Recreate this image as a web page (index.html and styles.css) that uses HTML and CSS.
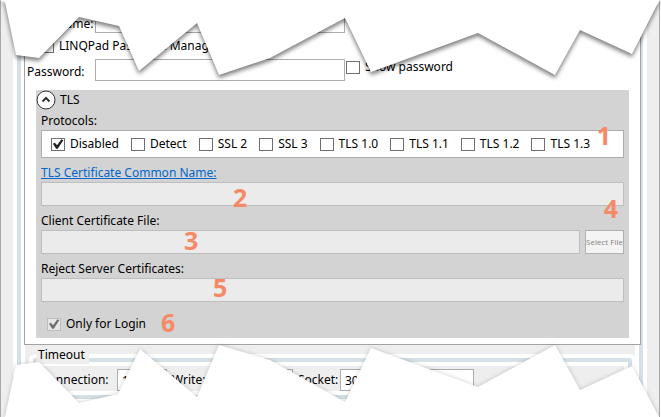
FILE: index.html
```html
<!DOCTYPE html>
<html lang="en">
<head>
<meta charset="utf-8">
<title>Connection settings</title>
<link rel="stylesheet" href="styles.css">
</head>
<body>
<main class="window">
  <div class="group"><div class="group-line"><div class="group-body">
    <section class="panel">
      <div class="credentials">
        <label for="user">User Name:</label>
        <input class="field" id="user" type="text">
        <label class="check manager"><input type="checkbox">LINQPad Password Manager</label>
        <label for="password">Password:</label>
        <input class="field" id="password" type="password">
        <label class="check show"><input type="checkbox">Show password</label>
      </div>
      <section class="tls">
        <header class="tls-head">
          <button class="toggle" type="button" aria-label="Collapse TLS">
            <svg viewBox="0 0 20 20" width="20" height="20"><circle cx="10" cy="10" r="9" fill="#fff" stroke="#333"/><path d="M6.500 11.500 10 8l3.500 3.500" fill="none" stroke="#333" stroke-width="2"/></svg>
          </button>
          <span>TLS</span>
        </header>
        <div class="caption">Protocols:</div>
        <div class="protocols">
          <label class="check"><input type="checkbox" checked>Disabled</label>
          <label class="check"><input type="checkbox">Detect</label>
          <label class="check"><input type="checkbox">SSL 2</label>
          <label class="check"><input type="checkbox">SSL 3</label>
          <label class="check"><input type="checkbox">TLS 1.0</label>
          <label class="check"><input type="checkbox">TLS 1.1</label>
          <label class="check"><input type="checkbox">TLS 1.2</label>
          <label class="check"><input type="checkbox">TLS 1.3</label>
          <span class="mark mark-1">1</span>
        </div>
        <div class="entry">
          <label for="common"><a href="#common">TLS Certificate Common Name:</a></label>
          <div class="line"><input class="field" id="common" type="text" disabled></div>
          <span class="mark mark-2">2</span>
        </div>
        <div class="entry">
          <label for="file">Client Certificate File:</label>
          <div class="line"><input class="field" id="file" type="text" disabled><button class="select" type="button" disabled>Select File</button></div>
          <span class="mark mark-3">3</span>
          <span class="mark mark-4">4</span>
        </div>
        <div class="entry">
          <label for="reject">Reject Server Certificates:</label>
          <div class="line"><input class="field" id="reject" type="text" disabled></div>
          <span class="mark mark-5">5</span>
        </div>
        <div class="login">
          <label class="check"><input type="checkbox" checked disabled>Only for Login</label>
          <span class="mark mark-6">6</span>
        </div>
      </section>
    </section>
    <section class="timeout">
      <h2>Timeout</h2>
      <div class="timeout-line"><div class="timeout-body">
        <label for="connection">Connection:</label><input class="field" id="connection" type="text" value="15">
        <label class="next" for="write">Write:</label><input class="field" id="write" type="text">
        <label class="next" for="socket">Socket:</label><input class="field" id="socket" type="text" value="300">
      </div></div>
    </section>
  </div></div></div>
</main>
<svg class="tear tear-top" viewBox="0 0 661 90" preserveAspectRatio="none" aria-hidden="true"><path fill="#fff" d="M0 0 5 2 16 55 39 58 79 17 119 26 139 71 197 23 219 75 270 58 345 18 371 72 478 33 555 75 580 30 632 54 659 1 661 0Z"/></svg>
<svg class="tear tear-bottom" viewBox="0 0 661 90" preserveAspectRatio="none" aria-hidden="true"><path fill="#fff" d="M5 90 16 38 39 35 79 76 118 67 140 22 197 70 219 18 270 33 345 75 371 21 478 60 555 18 580 63 632 39 659 90Z"/></svg>
</body>
</html>
```
FILE: styles.css
```css
* { box-sizing: border-box; }
body {
  position: relative;
  margin: 0;
  min-height: 100vh;
  overflow: hidden;
  background: #fff;
  color: #000;
  font: 12px/20px "Noto Sans", "Open Sans", sans-serif;
}
input, button { font: inherit; margin: 0; }

.window {
  min-height: 100vh;
  margin-right: 1px;
  padding: 0 12px;
  border: solid #a8a8a8;
  border-width: 0 1px;
  background: #eee;
}
.group, .group-body { border: solid #fff; border-width: 0 4px; }
.group-line { border: solid #d6e0e7; border-width: 0 4px; }
.group-body { background: #eee; min-height: 100vh; }

.panel {
  margin: 0 -6px 0 -1px;
  padding: 11px 11px 6px;
  border: 1px solid #a3a3a3;
  border-top: 0;
  background: #fff;
}
.credentials {
  display: grid;
  grid-template-columns: 68px 250px 1fr;
  grid-template-rows: 22px 26px 22px;
  align-items: center;
  margin: 0 0 9px -9px;
}
.credentials .manager { grid-column: 1 / -1; margin-left: 13px; }
.credentials .show { align-self: start; margin-left: 1px; line-height: 16px; }
.credentials label { white-space: nowrap; }
.credentials label[for] { align-self: end; line-height: 18px; }

.field {
  width: 100%;
  min-width: 0;
  height: 22px;
  padding: 0 4px;
  border: 1px solid #abadb3;
  background: #fff;
}
.check { display: flex; align-items: center; gap: 5px; white-space: nowrap; }
.check input {
  appearance: none;
  flex: none;
  width: 14px;
  height: 13px;
  border: 1px solid #707070;
  background: #fff;
}
.check input:checked::before {
  content: "";
  display: block;
  height: 100%;
  background: #212121;
  clip-path: polygon(8% 48%, 24% 38%, 42% 62%, 78% 6%, 94% 16%, 48% 94%, 34% 94%);
}
.check input:disabled { border-color: #bcbcbc; background: #e6e6e6; }
.check input:disabled:checked::before { background: #707070; }

.tls { padding: 0 5px 4px; background: #d3d3d3; border-radius: 1px; }
.tls-head { display: flex; align-items: center; gap: 4px; height: 20px; margin-left: -5px; }
.toggle { display: block; width: 20px; height: 20px; padding: 0; border: 0; background: none; }
.toggle svg { display: block; }
.caption { height: 20px; line-height: 22px; }
.protocols {
  position: relative;
  display: flex;
  gap: 12px;
  height: 28px;
  padding: 0 9px;
  border: 1px solid #abadb3;
  background: #fff;
}
.entry { position: relative; padding-top: 5px; }
.entry label { display: block; height: 19px; }
.entry a { color: #0066cc; text-decoration: underline; }
.line { display: flex; gap: 5px; }
.line .field { flex: 1; height: 24px; border-color: #bcbebf; background: #ebebeb; }
.select {
  width: 39px;
  padding: 0;
  border: 1px solid #adb2b5;
  background: #f4f4f4;
  color: #838383;
  font-family: "Open Sans", sans-serif;
  font-size: 8px;
  white-space: nowrap;
  display: flex;
  align-items: center;
  justify-content: center;
}
.login { position: relative; padding: 12px 6px 0; }

.mark {
  position: absolute;
  color: #f58a65;
  font-family: "Noto Sans", sans-serif;
  font-size: 25px;
  font-weight: 700;
  line-height: 24px;
}
.mark-1 { right: 12px; top: -8px; }
.mark-2 { left: 192px; top: 27px; }
.mark-3 { left: 143px; top: 22px; }
.mark-4 { right: 6px; top: -10px; }
.mark-5 { left: 172px; top: 21px; }
.mark-6 { left: 120px; top: 8px; }

.timeout {
  margin: 9px -1px 0 4px;
  border: 4px solid #fff;
  border-radius: 6px;
}
.timeout h2 {
  position: relative;
  width: 53px;
  height: 18px;
  margin: -12px 0 -6px 3px;
  padding-left: 2px;
  background: #eee;
  font-size: 12px;
  font-weight: 400;
  line-height: 18px;
}
.timeout-line { border: 4px solid #d6e0e7; border-radius: 4px; }
.timeout-body {
  display: grid;
  grid-template-columns: 76px 50px 76px 50px 47px 134px;
  align-items: center;
  padding-top: 3px;
  border: 4px solid #fff;
}
.timeout-body .next { padding-left: 5px; }

.tear { position: absolute; left: 0; width: 100%; height: 90px; pointer-events: none; }
.tear-top { top: 0; filter: drop-shadow(0 3px 2px rgba(0, 0, 0, 0.5)); }
.tear-bottom { bottom: 0; filter: drop-shadow(0 0 2px rgba(0, 0, 0, 0.2)); }
```
